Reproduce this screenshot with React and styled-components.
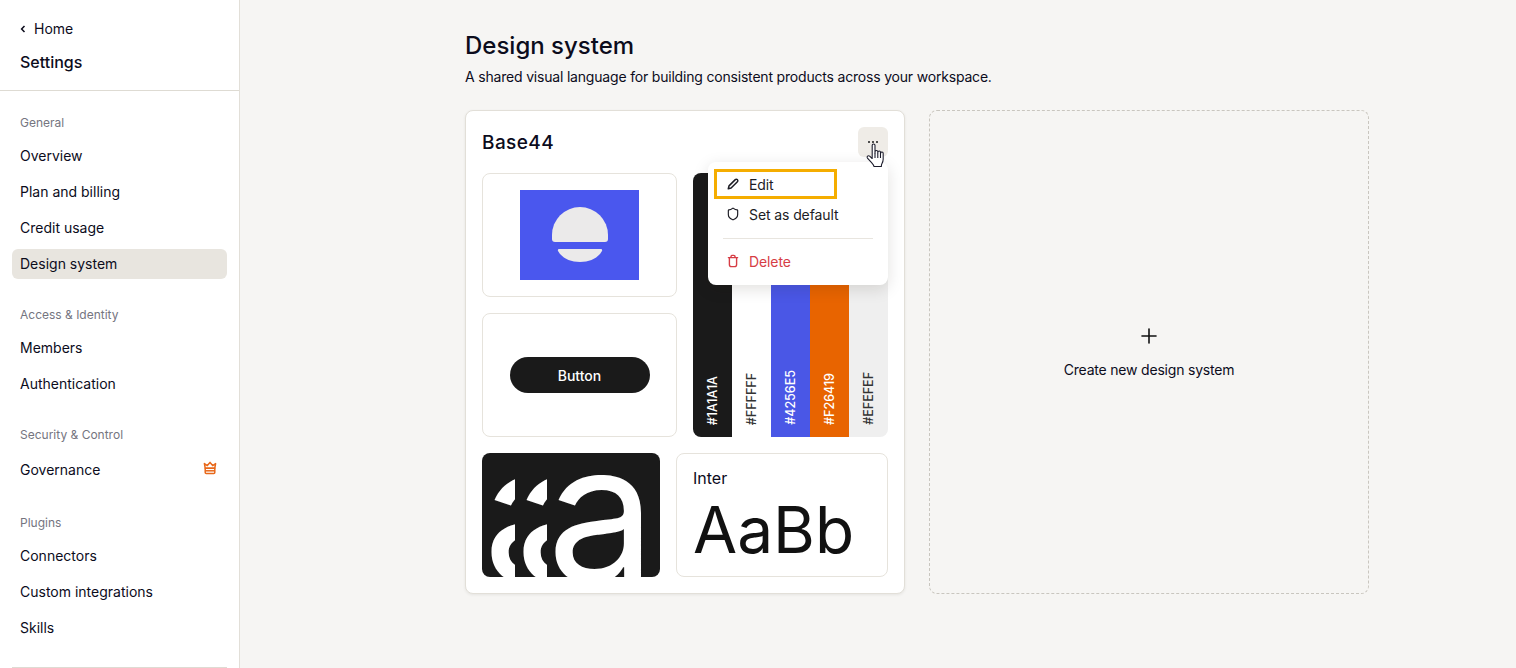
import React from "react";
import styled, { createGlobalStyle } from "styled-components";
import { Shield, Plus } from "lucide-react";

const GlobalStyle = createGlobalStyle`
  html, body {
    margin: 0;
    height: 100%;
    overflow: hidden;
    background: #f6f5f3;
    font-family: Inter, "Liberation Sans", sans-serif;
    color: #0c0c1c;
  }
  * { box-sizing: border-box; }
`

const Page = styled.div`
  display: flex;
  width: 1516px;
  height: 668px;
  overflow: hidden;
`

const Sidebar = styled.aside`
  flex: 0 0 240px;
  height: 668px;
  background: #fff;
  border-right: 1px solid #e2dfd8;
  overflow: hidden;
`

const SideHeader = styled.div`
  height: 91px;
  padding: 19px 20px 0;
  border-bottom: 1px solid #dedbd3;
`

const HomeLink = styled.div`
  display: flex;
  align-items: center;
  gap: 8px;
  height: 20px;
  font-size: 14px;
  padding-bottom: 1px;
`

const SettingsTitle = styled.div`
  margin-top: 11px;
  font-size: 16px;
  line-height: 24px;
  font-weight: 500;
`

const Nav = styled.nav`
  padding: 22px 12px 0;
`

const Section = styled.div`
  & + & { margin-top: 26px; }
`

const SectionLabel = styled.div`
  padding: 1px 0 0 8px;
  height: 18px;
  margin-bottom: 10px;
  font-size: 12px;
  line-height: 18px;
  color: #75757f;
`

const Items = styled.div`
  display: flex;
  flex-direction: column;
  gap: 6px;
`

const Item = styled.div`
  display: flex;
  align-items: center;
  justify-content: space-between;
  height: ${p => (p.$tall ? "34px" : "30px")};
  padding: 0 10px 1px 8px;
  border-radius: 6px;
  font-size: 14px;
  background: ${p => (p.$active ? "#e8e5df" : "transparent")};
`

const SideFooter = styled.div`
  margin-top: 24px;
  border-top: 1px solid #dedbd3;
`

const Main = styled.main`
  flex: 1;
  padding: 29px 0 0 225px;
`

const Title = styled.h1`
  margin: 0;
  font-size: 24px;
  line-height: 34px;
  font-weight: 500;
`

const Subtitle = styled.p`
  margin: 4px 0 0;
  font-size: 14px;
  line-height: 20px;
  letter-spacing: -0.19px;
`

const Cards = styled.div`
  display: flex;
  gap: 24px;
  margin-top: 23px;
`

const SystemCard = styled.section`
  position: relative;
  width: 440px;
  height: 484px;
  padding: 16px;
  background: #fff;
  border: 1px solid #e2dfd8;
  border-radius: 8px;
  box-shadow: 0 1px 3px rgba(40, 35, 20, 0.08);
`

const CardHead = styled.div`
  display: flex;
  align-items: center;
  justify-content: space-between;
  height: 30px;
`

const CardName = styled.h2`
  margin: 0;
  font-size: 19px;
  font-weight: 500;
  letter-spacing: 0.4px;
`

const MoreButton = styled.div`
  position: relative;
  display: flex;
  justify-content: center;
  width: 30px;
  height: 30px;
  padding-top: 14px;
  border-radius: 6px;
  background: #efece7;
`

const Dots = styled.span`
  display: flex;
  gap: 2px;
  height: 2px;
  i {
    display: block;
    width: 2px;
    height: 2px;
    border-radius: 50%;
    background: #1a1a1a;
  }
`

const CursorIcon = styled.svg`
  position: absolute;
  left: 7px;
  top: 16px;
  width: 23px;
  height: 28px;
  z-index: 3;
`

const Preview = styled.div`
  display: grid;
  grid-template-columns: 195px 195px;
  grid-template-rows: 124px 124px;
  gap: 16px;
  margin-top: 16px;
`

const Tile = styled.div`
  display: flex;
  align-items: center;
  justify-content: center;
  border: 1px solid #e6e3dc;
  border-radius: 8px;
  background: #fff;
`

const DemoButton = styled.div`
  display: flex;
  align-items: center;
  justify-content: center;
  width: 140px;
  height: 36px;
  border-radius: 18px;
  background: #1a1a1a;
  color: #fff;
  font-size: 14px;
  font-weight: 500;
`

const Palette = styled.div`
  grid-column: 2;
  grid-row: 1 / span 2;
  display: flex;
  overflow: hidden;
  border-radius: 8px;
`

const Swatch = styled.div`
  flex: 1;
  display: flex;
  justify-content: center;
  align-items: flex-end;
  padding-bottom: 12px;
  background: ${p => p.$bg};
  color: ${p => p.$fg};
`

const SwatchLabel = styled.span`
  writing-mode: vertical-rl;
  transform: rotate(180deg);
  font-size: 12.5px;
  font-weight: 500;
  line-height: 14px;
`

const BottomRow = styled.div`
  display: grid;
  grid-template-columns: 178px 212px;
  grid-template-rows: 124px;
  column-gap: 16px;
  margin-top: 16px;
`

const TypeSample = styled.div`
  display: flex;
  padding-left: 1px;
  overflow: hidden;
  border-radius: 8px;
  background: #1a1a1a;
`

const TypeSlice = styled.div`
  flex: 0 0 ${p => (p.$last ? "110px" : "32px")};
  overflow: hidden;
  color: #fff;
  font-size: 194px;
  font-weight: 400;
  line-height: 118px;
  white-space: nowrap;
`

const FontTile = styled.div`
  padding: 14px 0 0 16px;
  border: 1px solid #e6e3dc;
  border-radius: 8px;
  background: #fff;
  overflow: hidden;
`

const FontName = styled.div`
  font-size: 16px;
  line-height: 20px;
`

const FontGlyphs = styled.div`
  margin-top: 4px;
  font-size: 64px;
  line-height: 76px;
  color: #111;
`

const Menu = styled.div`
  position: absolute;
  left: 242px;
  top: 51px;
  width: 180px;
  height: 123px;
  padding: 7px 6px;
  border-radius: 8px;
  background: #fff;
  box-shadow: 0 4px 16px rgba(30, 25, 10, 0.13);
  z-index: 2;
`

const MenuItem = styled.div`
  display: flex;
  align-items: center;
  gap: 9px;
  height: 30px;
  padding-left: ${p => (p.$outlined ? "9px" : "12px")};
  width: ${p => (p.$outlined ? "123px" : "auto")};
  font-size: 14px;
  letter-spacing: -0.1px;
  white-space: nowrap;
  color: ${p => (p.$danger ? "#d63d45" : "#1c1c24")};
  border: ${p => (p.$outlined ? "3px solid #f5ad00" : "0")};
  svg { flex: 0 0 auto; }
`

const MenuRule = styled.div`
  height: 1px;
  margin: 9px 9px 7px;
  background: #e8e5df;
`

const CreateCard = styled.div`
  display: flex;
  flex-direction: column;
  align-items: center;
  padding-top: 213px;
  width: 440px;
  height: 484px;
  border: 1px dashed #c9c6bf;
  border-radius: 8px;
  font-size: 14px;
`

const CreateLabel = styled.div`
  margin-top: 12px;
  line-height: 20px;
  letter-spacing: -0.2px;
`

const navGroups = [
  { label: "General", items: ["Overview", "Plan and billing", "Credit usage", "Design system"] },
  { label: "Access & Identity", items: ["Members", "Authentication"] },
  { label: "Security & Control", items: ["Governance"] },
  { label: "Plugins", items: ["Connectors", "Custom integrations", "Skills"] },
]

const swatches = [
  { hex: "#1A1A1A", bg: "#1a1a1a", fg: "#fff" },
  { hex: "#FFFFFF", bg: "#fff", fg: "#333" },
  { hex: "#4256E5", bg: "#4a57e6", fg: "#fff" },
  { hex: "#F26419", bg: "#e86400", fg: "#fff" },
  { hex: "#EFEFEF", bg: "#efefef", fg: "#333" },
]

const Crown = () => (
  <svg width="14" height="14" viewBox="0 0 14 14" fill="none" stroke="#e8681a" strokeWidth="1.5" strokeLinejoin="round" style={{ marginBottom: 3 }}>
    <path d="M2.2 7.2 1.4 2.6l2.9 2L7 1.4l2.7 3.2 2.9-2-.8 4.600z" />
    <path d="M2.200 7.200h9.600v4.200a1 1 0 0 1-1 1H3.200a1 1 0 0 1-1-1z" />
    <path d="M2.400 9.800h9.200" />
  </svg>
)

const BackChevron = () => (
  <svg width="6" height="8" viewBox="0 0 6 8" fill="none" stroke="#0c0c1c" strokeWidth="1.5">
    <path d="M4.500 1 1.600 4l2.900 3" />
  </svg>
)

const PencilIcon = () => (
  <svg width="14" height="14" viewBox="0 0 14 14" fill="none" stroke="#1c1c24" strokeWidth="1.5" strokeLinejoin="round">
    <path d="M2.300 11.700 3 8.900 9.300 2.600a1.400 1.400 0 0 1 2 0l.1.100a1.400 1.400 0 0 1 0 2L5.100 11z" />
  </svg>
)

const TrashIcon = () => (
  <svg width="14" height="14" viewBox="0 0 14 14" fill="none" stroke="#d63d45" strokeWidth="1.4" strokeLinecap="round">
    <path d="M2.400 3.600h9.200" />
    <path d="M5 3.400V2.600a1.200 1.200 0 0 1 1.200-1.200h1.600A1.200 1.200 0 0 1 9 2.600v.8" />
    <path d="M3.400 3.800v6.600a2.200 2.200 0 0 0 2.200 2.200h2.800a2.200 2.200 0 0 0 2.200-2.200V3.800" />
  </svg>
)

const LogoMark = () => (
  <svg width="119" height="90" viewBox="0 0 119 90">
    <rect width="119" height="90" fill="#4a57ee" />
    <path d="M32 45A28 28 0 0 1 88 45v4q0 3-3 3H35q-3 0-3-3z" fill="#ebeaea" />
    <path d="M39.500 59h41c1.500 0 2 1 1.500 2C78 68 70 72 60 72s-18-4-22-11c-.5-1 0-2 1.500-2z" fill="#ebeaea" />
  </svg>
)

const App = () => (
  <>
    <GlobalStyle />
    <Page>
      <Sidebar>
        <SideHeader>
          <HomeLink><BackChevron /> Home</HomeLink>
          <SettingsTitle>Settings</SettingsTitle>
        </SideHeader>
        <Nav>
          {navGroups.map(group => (
            <Section key={group.label}>
              <SectionLabel>{group.label}</SectionLabel>
              <Items>
                {group.items.map(item => (
                  <Item key={item} $active={item === "Design system"} $tall={item === "Governance"}>
                    {item}
                    {item === "Governance" && <Crown />}
                  </Item>
                ))}
              </Items>
            </Section>
          ))}
          <SideFooter />
        </Nav>
      </Sidebar>
      <Main>
        <Title>Design system</Title>
        <Subtitle>A shared visual language for building consistent products across your workspace.</Subtitle>
        <Cards>
          <SystemCard>
            <CardHead>
              <CardName>Base44</CardName>
              <MoreButton>
                <Dots><i /><i /><i /></Dots>
                <CursorIcon viewBox="0 0 20 26" fill="#fff" stroke="#1a1a2a" strokeWidth="1" strokeLinejoin="round">
                  <path d="M6 2.200c0-1.600 2.600-1.600 2.600 0v7.300l.1-1.500c0-1.400 2.500-1.400 2.500 0v1.500l.1-1c0-1.400 2.400-1.400 2.400 0v1.500l.2-.7c.2-1.300 2.300-1.100 2.300.3v5.400c0 1.800-.5 3-1.200 4.300-.4.800-.5 1.600-.5 2.500H7.600c-.2-1.500-1.300-2.600-2.400-3.800L1.600 14c-1-1.200.6-2.900 2-1.800L6 14.400z" />
                  <path d="M8.600 9.500v4.500M11.200 9.500v4.500M13.700 10v4" fill="none" />
                </CursorIcon>
              </MoreButton>
            </CardHead>
            <Preview>
              <Tile><LogoMark /></Tile>
              <Palette>
                {swatches.map(s => (
                  <Swatch key={s.hex} $bg={s.bg} $fg={s.fg}>
                    <SwatchLabel>{s.hex}</SwatchLabel>
                  </Swatch>
                ))}
              </Palette>
              <Tile><DemoButton>Button</DemoButton></Tile>
            </Preview>
            <BottomRow>
              <TypeSample>
                <TypeSlice>a</TypeSlice>
                <TypeSlice>a</TypeSlice>
                <TypeSlice $last>a</TypeSlice>
              </TypeSample>
              <FontTile>
                <FontName>Inter</FontName>
                <FontGlyphs>AaBb</FontGlyphs>
              </FontTile>
            </BottomRow>
            <Menu>
              <MenuItem $outlined><PencilIcon /> Edit</MenuItem>
              <MenuItem><Shield size={14} color="#1c1c24" strokeWidth={2} /> Set as default</MenuItem>
              <MenuRule />
              <MenuItem $danger><TrashIcon /> Delete</MenuItem>
            </Menu>
          </SystemCard>
          <CreateCard>
            <Plus size={24} strokeWidth={1.6} color="#111" />
            <CreateLabel>Create new design system</CreateLabel>
          </CreateCard>
        </Cards>
      </Main>
    </Page>
  </>
)

export default App
